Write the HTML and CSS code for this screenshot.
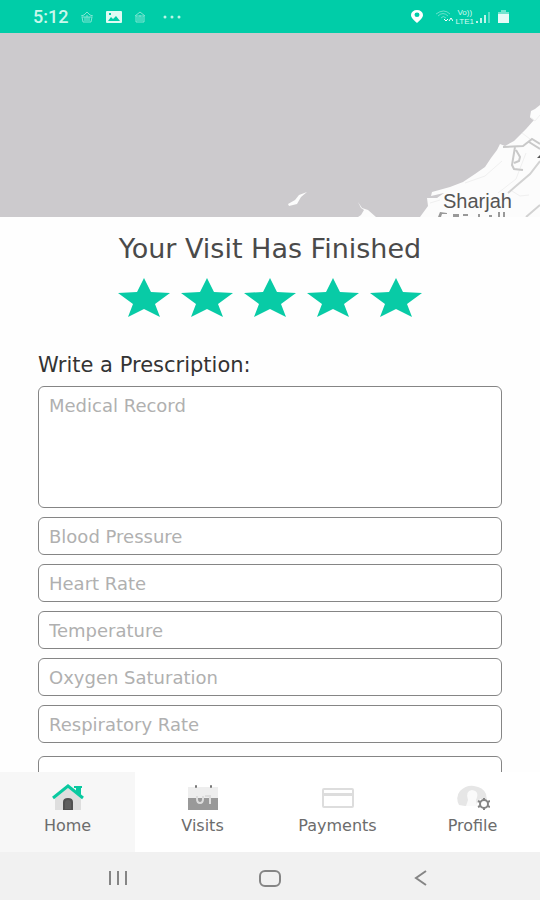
FILE: index.html
```
<!DOCTYPE html>
<html lang="en">

<head>
    <meta charset="UTF-8">
    <meta name="viewport" content="width=device-width, initial-scale=1.0">
    <title>Visit Finished</title>
    <link rel="stylesheet" href="styles.css">
</head>

<body>
    <header class="status">
        <div class="status-left">
            <span class="clock">5:12</span>
            <svg class="dim" width="14" height="12" viewBox="0 0 14 12">
                <path d="M1 5l3-1 3-3 3 3 3 1M2 6h10l-1 5H3zM5 6v4M7 4v6M9 6v4" fill="none" stroke="#fff" />
            </svg>
            <svg width="16" height="12" viewBox="0 0 16 12">
                <path fill="#e0fbf4" fill-rule="evenodd" d="M1 0h14a1 1 0 0 1 1 1v10a1 1 0 0 1-1 1H1a1 1 0 0 1-1-1V1a1 1 0 0 1 1-1zM2 10h12L10 5 7 8 5 6zM3 2v2h2V2z" />
            </svg>
            <svg class="dim" width="12" height="12" viewBox="0 0 12 12">
                <path d="M1 5l5-4 5 4M2 5h8v6H2zM4 6v4M6 4v6M8 6v4" fill="none" stroke="#fff" />
            </svg>
            <svg class="dots" width="20" height="4" viewBox="0 0 20 4">
                <g fill="#b9f5e6">
                    <circle cx="3" cy="2" r="1.5" />
                    <circle cx="10" cy="2" r="1.5" />
                    <circle cx="17" cy="2" r="1.5" />
                </g>
            </svg>
        </div>
        <div class="status-right">
            <svg width="12" height="13" viewBox="0 0 12 13">
                <path fill="#fff" fill-rule="evenodd" d="M6 13C3 10 0 8 0 5a6 5 0 0 1 12 0c0 3-3 5-6 8zM6 2.500a2.500 2.200 0 1 0 0 4.400 2.500 2.200 0 0 0 0-4.400z" />
            </svg>
            <svg width="18" height="14" viewBox="0 0 18 14">
                <g fill="none" stroke="#fff">
                    <path opacity=".4" d="M1 4q8-6 14 0M3 6q5-5 10 0M6 8q2-3 5 0" />
                    <path d="M9 9l2 2 2-2M14 11l2-3 2 3" />
                </g>
            </svg>
            <span class="volte"><span>Vo))</span><span>LTE1</span></span>
            <svg width="14" height="13" viewBox="0 0 14 13">
                <path fill="#fff" opacity=".75" d="M0 11h2v2H0zM4 8h2v5H4zM8 5h2v8H8z" />
                <path fill="#fff" opacity=".35" d="M12 2h2v11h-2z" />
            </svg>
            <svg class="battery" width="11" height="13" viewBox="0 0 11 13">
                <path fill="#fff" opacity=".9" d="M3 0h5v2h3v11H0V2h3z" />
                <path fill="#00cda8" opacity=".5" d="M3 0h5v2h3v2H0V2h3z" />
            </svg>
        </div>
    </header>

    <main class="content">
        <svg class="map" viewBox="0 0 540 184" preserveAspectRatio="xMaxYMax slice" role="img" aria-label="Map of Sharjah">
            <rect width="540" height="184" fill="#cccacd" />
            <path fill="#fcfcfc" d="M540 72L535 76 531 78 530 84 534 87 526 96 514 108 505 113 500 111 497 117 491 125 485 134 475 141 463 149 450 154 432 159 431 163 444 160 437 165 427 165 428 173 420 184H540z" />
            <path fill="#fcfcfc" d="M307 159l-8 3-4 5-7 4 1 2 8-2 4-7zM358 169l3 6 3 2-3 5-3 2h18l-8-7-6-2z" />
            <g fill="none" stroke="#f0f0f0" stroke-width="1">
                <path d="M502 128l-17 15-20 7M526 120l-10 26-18 14M530 84l5 4 5-6M512 158l8 5 9-1M430 170l10-3M522 100l8 6" />
            </g>
            <g fill="none" stroke="#c9c9c9" stroke-width="2">
                <path d="M503 114l20-1 9-7 8 5M529 109l11 7M515 114l-3 18 2 4 9 1M516 117l4 7-1 4-5 2" />
            </g>
            <g fill="none" stroke="#d2d2d2" stroke-width="2">
                <path d="M540 128l-10 13-14 12-8 7M540 172l-14 12" />
            </g>
            <path fill="#555" d="M540 122l-3 3h3z" />
            <path fill="#999" d="M438 184l2-5 7 1v1h-5l-1 3zM453 181h6v3h-6zM463 181h5v2h-5zM478 181h2v3h-2zM489 182h3v2h-3zM498 179h2v5h-2zM503 179h2v5h-2z" />
            <text x="443" y="175" class="place">Sharjah</text>
        </svg>

        <section class="visit">
            <h1>Your Visit Has Finished</h1>
            <div class="stars">
                <button type="button" aria-label="1 star"><svg viewBox="0 0 52 39"><path d="M26 0l7 14 19 1-15 11 5 13-16-8-16 8 5-13L0 15l19-1z" /></svg></button>
                <button type="button" aria-label="2 stars"><svg viewBox="0 0 52 39"><path d="M26 0l7 14 19 1-15 11 5 13-16-8-16 8 5-13L0 15l19-1z" /></svg></button>
                <button type="button" aria-label="3 stars"><svg viewBox="0 0 52 39"><path d="M26 0l7 14 19 1-15 11 5 13-16-8-16 8 5-13L0 15l19-1z" /></svg></button>
                <button type="button" aria-label="4 stars"><svg viewBox="0 0 52 39"><path d="M26 0l7 14 19 1-15 11 5 13-16-8-16 8 5-13L0 15l19-1z" /></svg></button>
                <button type="button" aria-label="5 stars"><svg viewBox="0 0 52 39"><path d="M26 0l7 14 19 1-15 11 5 13-16-8-16 8 5-13L0 15l19-1z" /></svg></button>
            </div>

            <h2>Write a Prescription:</h2>
            <form class="fields">
                <textarea class="record" aria-label="Medical Record" placeholder="Medical Record"></textarea>
                <input type="text" aria-label="Blood Pressure" placeholder="Blood Pressure">
                <input type="text" aria-label="Heart Rate" placeholder="Heart Rate">
                <input type="text" aria-label="Temperature" placeholder="Temperature">
                <input type="text" aria-label="Oxygen Saturation" placeholder="Oxygen Saturation">
                <input type="text" aria-label="Respiratory Rate" placeholder="Respiratory Rate">
                <textarea class="notes" aria-label="Notes"></textarea>
            </form>
        </section>
    </main>

    <nav class="tabs">
        <a href="#" class="active">
            <svg width="34" height="28" viewBox="0 0 34 28">
                <path fill="#dedede" d="M4 14L17 4l13 10v12H4z" />
                <path fill="#505050" d="M12 26V18q0-4 5-4t5 4v8z" />
                <path fill="#777" d="M14 25v-6q0-3 3-3t3 3v6z" opacity=".35" />
                <path fill="none" stroke="#0ac9a0" stroke-width="3" d="M2 14L17 2l15 12" />
                <path fill="#0ac9a0" d="M23 2h8v2h-1v7l-5-3V4h-2z" />
            </svg>
            <span>Home</span>
        </a>
        <a href="#">
            <svg width="34" height="28" viewBox="0 0 34 28">
                <path fill="#eee" d="M2 3h30v12H2z" />
                <path fill="#999" d="M2 14h30v12H2z" />
                <path fill="none" stroke="#777" stroke-width="2" stroke-linecap="round" d="M10 2v1M25 2v1" />
                <path fill="none" stroke="#ddd" stroke-width="2" d="M11 12v3q0 4 3 4t3-4v-3M19 12h5v8" />
            </svg>
            <span>Visits</span>
        </a>
        <a href="#">
            <svg width="34" height="28" viewBox="0 0 34 28">
                <rect x="2" y="5" width="30" height="18" rx="1" fill="none" stroke="#ddd" stroke-width="2" />
                <path fill="#ddd" d="M2 9h30v3H2z" />
            </svg>
            <span>Payments</span>
        </a>
        <a href="#">
            <svg width="34" height="28" viewBox="0 0 34 28">
                <path fill="#e6e6e6" d="M3 21Q-1 13 4 7q6-6 14-5 9 1 12 8l1 6-7-1-4 6-11 1z" />
                <path fill="#fafafa" d="M10 22l2-6q-3-9 4-10 8 1 4 10l1 6z" />
                <circle cx="28" cy="20" r="4" fill="#fff" stroke="#858585" stroke-width="2" />
                <path fill="none" stroke="#858585" stroke-width="2" d="M28 14v2M28 24v2M22 17l2 1M32 22l2 1M22 23l2-1M32 18l2-1" />
            </svg>
            <span>Profile</span>
        </a>
    </nav>

    <footer class="keys">
        <button type="button" aria-label="Recent apps">
            <svg width="24" height="20" viewBox="0 0 24 20"><path d="M4 3v14M12 3v14M20 3v14" /></svg>
        </button>
        <button type="button" aria-label="Home screen">
            <svg width="24" height="20" viewBox="0 0 24 20"><rect x="2" y="3" width="20" height="15" rx="5" /></svg>
        </button>
        <button type="button" aria-label="Back">
            <svg width="24" height="20" viewBox="0 0 24 20"><path d="M16 3L6 10l10 7" /></svg>
        </button>
    </footer>
</body>

</html>
```
FILE: styles.css
```
* {
    margin: 0;
    padding: 0;
    box-sizing: border-box;
}

body {
    display: flex;
    flex-direction: column;
    height: 100vh;
    overflow: hidden;
    background-color: #fefefe;
    color: #4a4a4a;
    font-family: "DejaVu Sans", sans-serif;
}

button {
    border: none;
    background: none;
    cursor: pointer;
}

svg {
    display: block;
}

.status {
    flex: none;
    display: flex;
    justify-content: space-between;
    align-items: center;
    height: 33px;
    padding: 0 31px 0 33px;
    background-color: #00cda8;
}

.status-left,
.status-right {
    display: flex;
    align-items: center;
}

.status-left {
    gap: 12px;
}

.status-right {
    gap: 2px;
}

.status-right svg:first-child {
    margin-right: 10px;
}

.clock {
    color: #c9f8ec;
    font-family: Roboto, sans-serif;
    font-size: 18px;
    font-weight: 500;
}

.dim {
    opacity: .5;
}

.dots {
    margin-left: 4px;
}

.volte {
    display: flex;
    flex-direction: column;
    align-items: center;
    color: #d5faf1;
    font-family: "Liberation Sans", sans-serif;
    font-size: 8px;
    line-height: 9px;
}

.battery {
    margin-left: 6px;
}

.content {
    flex: 1;
    min-height: 0;
    overflow: hidden;
}

.map {
    width: 100%;
    height: 184px;
}

.place {
    fill: #555;
    font-family: "Liberation Sans", sans-serif;
    font-size: 20px;
}

.visit {
    padding: 16px 38px 0;
}

h1 {
    font-size: 27px;
    font-weight: 400;
    line-height: 32px;
    text-align: center;
}

.stars {
    display: flex;
    justify-content: center;
    gap: 11px;
    margin-top: 13px;
}

.stars svg {
    width: 52px;
    height: 39px;
    fill: #08cba6;
}

h2 {
    margin-top: 36px;
    color: #333;
    font-size: 21px;
    font-weight: 400;
    line-height: 24px;
}

.fields {
    display: flex;
    flex-direction: column;
    gap: 9px;
    margin-top: 9px;
}

.fields input,
.fields textarea {
    width: 100%;
    height: 38px;
    padding: 0 10px;
    border: 1px solid #858585;
    border-radius: 6px;
    background-color: #fff;
    color: #444;
    font-family: inherit;
    font-size: 18px;
    resize: none;
    outline: none;
}

.fields .record {
    height: 122px;
    padding: 8px 10px;
}

.fields .notes {
    height: 122px;
    margin-top: 4px;
}

.fields ::placeholder {
    color: #b0b0b0;
}

.tabs {
    flex: none;
    display: grid;
    grid-template-columns: repeat(4, 1fr);
    height: 80px;
    background-color: #fff;
}

.tabs a {
    display: flex;
    flex-direction: column;
    align-items: center;
    gap: 4px;
    padding-top: 12px;
    color: #6c6c6c;
    font-size: 16px;
    line-height: 20px;
    text-decoration: none;
}

.tabs .active {
    background-color: #f7f7f7;
}

.keys {
    flex: none;
    display: flex;
    justify-content: center;
    align-items: center;
    height: 48px;
    padding: 4px 42px 0;
    background-color: #f1f1f1;
}

.keys button {
    display: flex;
    justify-content: center;
    flex: 1;
}

.keys svg {
    fill: none;
    stroke: #858585;
    stroke-width: 2;
}
```
